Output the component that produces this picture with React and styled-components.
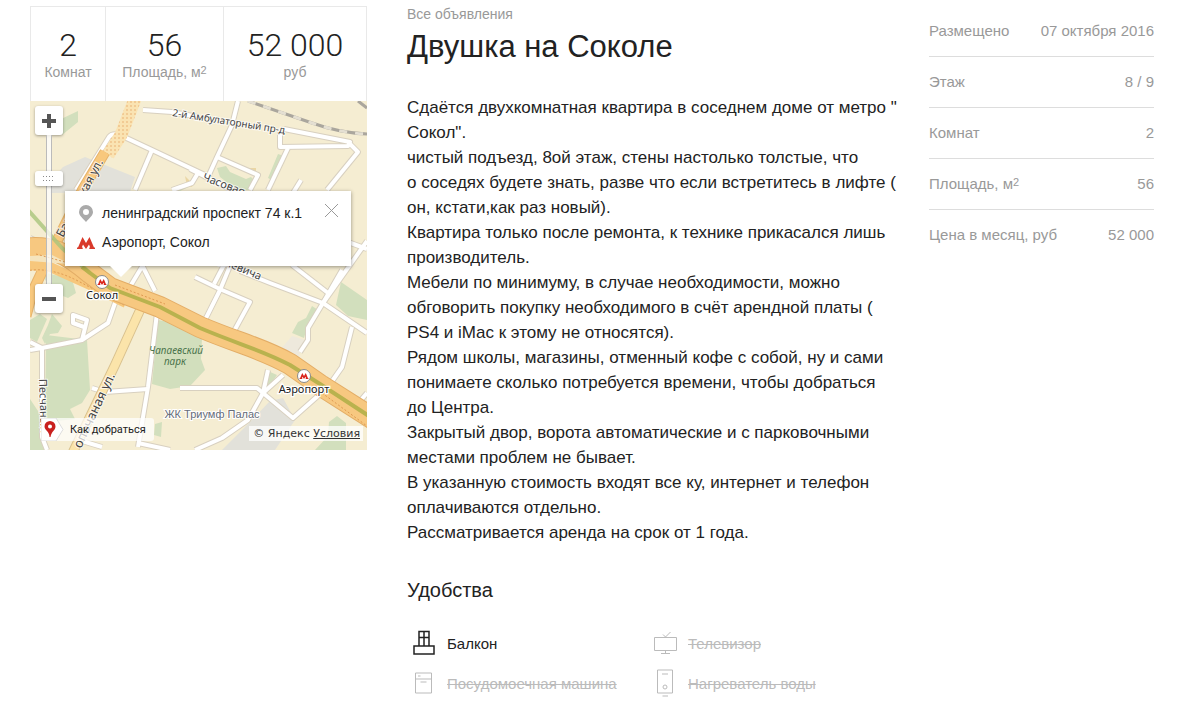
import React, { Fragment } from 'react';
import styled, { createGlobalStyle } from 'styled-components';

const GlobalStyle = createGlobalStyle`
  * { box-sizing: border-box; }
  body {
    margin: 0;
    background: #fff;
    color: #222;
    font-family: "Liberation Sans", Arial, sans-serif;
    font-size: 16px;
  }
`;

const Page = styled.div`
  display: grid;
  grid-template-columns: 337fr 482fr 225fr;
  column-gap: 40px;
  align-items: start;
  padding: 6px 46px 6px 30px;
`;

const Column = styled.div`
  min-width: 0;
`;

const Stats = styled.dl`
  display: grid;
  grid-template-columns: 74fr 118fr 143fr;
  margin: 0;
  border: 1px solid #e9e9e9;
  border-bottom: 0;
`;

const Stat = styled.div`
  display: flex;
  flex-direction: column-reverse;
  justify-content: flex-end;
  align-items: center;
  height: 94px;
  padding-top: 20px;
  & + & { border-left: 1px solid #e9e9e9; }
`;

const StatValue = styled.dd`
  margin: 0;
  font-family: Roboto, "Liberation Sans", sans-serif;
  font-size: 32px;
  font-weight: 300;
  line-height: 36px;
  white-space: nowrap;
`;

const StatLabel = styled.dt`
  color: #999;
  font-size: 14px;
  line-height: 18px;
`;

const Sup = styled.sup`
  font-size: 11px;
  line-height: 0;
  vertical-align: 3px;
`;

const MapBox = styled.section`
  position: relative;
  height: 349px;
  overflow: hidden;
  background: #f5edd2;
`;

const MapArt = styled.svg`
  display: block;
  width: 100%;
  height: 100%;
  font-family: "Noto Sans", "Open Sans", sans-serif;
`;

const ZoomPanel = styled.div`
  position: absolute;
  top: 5px;
  left: 5px;
  display: flex;
  flex-direction: column;
  align-items: center;
`;

const ZoomButton = styled.button`
  display: grid;
  place-items: center;
  width: 28px;
  height: 29px;
  padding: 0;
  border: 0;
  border-radius: 3px;
  background: #fff;
  box-shadow: 0 1px 3px rgba(0, 0, 0, 0.35);
  cursor: pointer;
`;

const ZoomSlider = styled.input`
  appearance: none;
  writing-mode: vertical-lr;
  direction: rtl;
  width: 28px;
  height: 149px;
  margin: 0;
  background: linear-gradient(90deg, transparent 11px, #bbb 11px 12px, rgba(255, 255, 255, 0.75) 12px 16px, #bbb 16px 17px, transparent 17px);
  &::-webkit-slider-thumb {
    appearance: none;
    width: 28px;
    height: 15px;
    border: 0;
    border-radius: 3px;
    background:
      linear-gradient(90deg, #fff 8px, transparent 8px 20px, #fff 20px),
      linear-gradient(#fff 5px, transparent 5px 10px, #fff 10px),
      conic-gradient(from 0deg at 1px 1px, #fff 75%, #888 0) 8px 5px / 3px 4px;
    box-shadow: 0 1px 3px rgba(0, 0, 0, 0.35);
  }
`;

const Balloon = styled.div`
  position: absolute;
  top: 90px;
  left: 35px;
  display: flex;
  justify-content: space-between;
  align-items: flex-start;
  width: 286px;
  height: 75px;
  padding: 8px 12px 8px 11px;
  background: #fff;
  box-shadow: 0 1px 4px rgba(0, 0, 0, 0.4);
  &::after {
    content: "";
    position: absolute;
    top: 75px;
    left: 45px;
    border: 11px solid transparent;
    border-top-color: #fff;
    border-bottom: 0;
  }
`;

const BalloonLine = styled.p`
  display: flex;
  align-items: center;
  gap: 6px;
  margin: 0;
  font-size: 14px;
  line-height: 29px;
  white-space: nowrap;
`;

const IconSlot = styled.span`
  display: grid;
  place-items: center;
  width: 20px;
`;

const CloseButton = styled.button`
  display: grid;
  margin-top: 4px;
  padding: 0;
  border: 0;
  background: none;
  cursor: pointer;
`;

const RouteButton = styled.button`
  position: absolute;
  bottom: 9px;
  left: 11px;
  display: flex;
  align-items: center;
  gap: 5px;
  height: 23px;
  padding: 0 8px 0 0;
  border: 0;
  border-radius: 3px;
  background: rgba(255, 255, 255, 0.7);
  color: #222;
  font: 11px/20px Roboto, "Open Sans", sans-serif;
  cursor: pointer;
`;

const Copyright = styled.div`
  position: absolute;
  right: 4px;
  bottom: 9px;
  padding: 0 3px 0 4px;
  background: rgba(255, 255, 255, 0.75);
  color: #333;
  font: 11px/15px "DejaVu Sans", sans-serif;
  a { color: inherit; }
`;

const BackLink = styled.a`
  display: block;
  color: #999;
  font-size: 14px;
  line-height: 17px;
  text-decoration: none;
`;

const Title = styled.h1`
  margin: 6px 0 30px;
  font-size: 31px;
  font-weight: 400;
  line-height: 36px;
`;

const Description = styled.p`
  margin: 0;
  font-size: 17px;
  line-height: 25px;
  white-space: nowrap;
`;

const Subtitle = styled.h2`
  margin: 32px 0 20px;
  font-size: 20px;
  font-weight: 400;
  line-height: 26px;
`;

const Amenities = styled.ul`
  display: grid;
  grid-template-columns: 1fr 1fr;
  margin: 0;
  padding: 0;
  list-style: none;
`;

const Amenity = styled.li`
  display: flex;
  align-items: center;
  gap: 6px;
  height: 40px;
  color: ${(p) => (p.$missing ? '#bbb' : '#222')};
  font-size: 15px;
  text-decoration: ${(p) => (p.$missing ? 'line-through' : 'none')};
  white-space: nowrap;
  svg { flex: none; }
`;

const Facts = styled.dl`
  margin: 0;
`;

const Fact = styled.div`
  display: flex;
  justify-content: space-between;
  color: #999;
  font-size: 15px;
  line-height: 50px;
  white-space: nowrap;
  & + & { border-top: 1px solid #ddd; }
  dt, dd { margin: 0; }
`;

const STATS = [
  ['2', 'Комнат'],
  ['56', <>Площадь, м<Sup>2</Sup></>],
  ['52 000', 'руб'],
];

const FACTS = [
  ['Размещено', '07 октября 2016'],
  ['Этаж', '8 / 9'],
  ['Комнат', '2'],
  [<>Площадь, м<Sup>2</Sup></>, '56'],
  ['Цена в месяц, руб', '52 000'],
];

const LINES = [
  'Сдаётся двухкомнатная квартира в соседнем доме от метро "',
  'Сокол".',
  'чистый подъезд, 8ой этаж, стены настолько толстые, что',
  'о соседях будете знать, разве что если встретитесь в лифте (',
  'он, кстати,как раз новый).',
  'Квартира только после ремонта, к технике прикасался лишь',
  'производитель.',
  'Мебели по минимуму, в случае необходимости, можно',
  'обговорить покупку необходимого в счёт арендной платы (',
  'PS4 и iMac к этому не относятся).',
  'Рядом школы, магазины, отменный кофе с собой, ну и сами',
  'понимаете сколько потребуется времени, чтобы добраться',
  'до Центра.',
  'Закрытый двор, ворота автоматические и с парковочными',
  'местами проблем не бывает.',
  'В указанную стоимость входят все ку, интернет и телефон',
  'оплачиваются отдельно.',
  'Рассматривается аренда на срок от 1 года.',
];

const ICONS = {
  balcony: (
    <g strokeWidth="1.5">
      <path d="M7 17V2.500h10V17M12 2.500V17M7 8.500h10M2 17h20v8h-20z" />
    </g>
  ),
  tv: <path d="M1.500 8.500h22v13h-22zM12.500 21.500v3M8 24.500h9M10 5.500l2.500 2.500L17.500 3" />,
  dishwasher: <path d="M3.500 4h16v20h-16zM3.500 10h16M6 7h2.500M8.500 13h6" />,
  heater: (
    <>
      <path d="M4.500 1h15v23h-15zM9 5h6M9.500 27h5.500" />
      <circle cx="12" cy="18" r="2" />
    </>
  ),
};

const AMENITIES = [
  ['balcony', 'Балкон', false],
  ['tv', 'Телевизор', true],
  ['dishwasher', 'Посудомоечная машина', true],
  ['heater', 'Нагреватель воды', true],
];

function AmenityIcon({ name }) {
  return (
    <svg width="34" height="28" viewBox="-5 0 34 28" fill="none" stroke="currentColor" aria-hidden="true">
      {ICONS[name]}
    </svg>
  );
}

const METRO_PATH = 'M0 12V10.500h1L5.500 0 9 6 12.500 0 17 10.500h1V12h-5.700v-1.500h.9L12 7.500 9 12 6 7.500l-1.200 3h.9V12z';

const ROADS = [
  'M46 89L79 36Q82 32 90 34L122 49L175 74',
  'M122 49L105 89',
  'M113 9L142 11L168 16',
  'M168 72L162 82L142 89',
  'M160 68L200 88',
  'M208 0L202 24L187 56L178 76',
  'M187 56L228 74L220 89',
  'M250 31V46L318 45L320 41L254 28',
  'M320 43L328 51L297 89',
  'M258 47L238 89',
  'M271 79L263 92',
  'M318 141L337 148',
  'M337 140L293 202',
  'M262 164L298 192',
  'M202 160L190 189L175 219',
  'M196 160L184 183',
  'M165 176L192 189L220 201L203 232',
  'M210 170L240 182L293 202L337 232',
  'M312 169L293 202L278 227V239L270 251',
  'M322 226L312 266L298 286L263 317L233 292L218 319L192 337L165 349',
  'M150 287H227L233 292L253 274',
  'M233 292L238 269',
  'M337 292L325 306',
  'M113 164L98 189L85 202L78 222L52 239L12 247L0 249',
  'M0 241L12 247V336L17 349',
  'M52 239L57 219L43 214V222L54 226',
  'M127 212L118 286L108 346',
  'M62 287L75 291L118 288',
  'M72 346L52 340',
  'M108 342L140 349',
  'M0 137L20 146L28 140',
  'M112 164L125 190',
];

function Station({ x, y, name }) {
  return (
    <>
      <g transform={`translate(${x} ${y})`}>
        <circle r="6.500" fill="#fff" stroke="#8a8a8a" />
        <path d={METRO_PATH} fill="#d9261c" transform="translate(-4.500 -3) scale(.5)" />
      </g>
      <text x={x} y={y + 17} fontSize="11" textAnchor="middle" fill="#222" stroke="#fff" strokeWidth="2.500" paintOrder="stroke">{name}</text>
    </>
  );
}

function CityMap() {
  return (
    <MapArt viewBox="0 0 337 349" preserveAspectRatio="xMidYMid slice" role="img" aria-label="Карта">
      <defs>
        <path id="highway" d="M-8 148C22 144 36 152 60 172L80 187L130 206L170 226C210 243 232 247 260 263L290 284L345 319" />
        <pattern id="dots" width="4" height="4" patternUnits="userSpaceOnUse">
          <rect width="4" height="4" fill="#fae3b2" />
          <rect width="2" height="2" fill="#f2cb94" />
        </pattern>
      </defs>
      <rect width="337" height="349" fill="#f5edd2" />
      <g fill="#d2dfbd">
        <path d="M29 19L48 10V21L32 34zM16 234L57 239L60 289L52 302L40 308L45 318L15 321zM128 219L145 222L172 237L171 258L175 269L160 285L140 288L122 283zM12 171L42 178L46 192L38 197L20 190zM0 219L10 213L17 218L7 241L0 237zM22 213L32 225L28 232L20 233L15 243L12 237L18 224z" />
        <path d="M187 67L196 65L200 71L216 78L221 76L226 81L220 89H207L190 76zM248 53L254 55L244 80L238 77zM282 205L288 209L278 223L274 237L262 232L268 221L276 217zM311 181L337 199V219L318 215L306 204zM238 270L247 274L238 287L234 285zM125 323L132 321L131 336L124 334zM143 86L160 81L161 85L150 90zM299 321L307 315L316 322L316 349H285L298 335zM0 298L8 310L17 349H0z" />
      </g>
      <g fill="#e2e1da">
        <path d="M33 66L55 56L105 76L100 91L20 92L22 78z" />
        <path d="M253 297L265 319L245 349H192L218 323L240 300z" />
        <path d="M262 235L275 239L268 257L249 250z" fill="#eee9dc" />
      </g>
      <g fill="#ead6a4"><path d="M155 75l5 5 6-3-4 9-5-1zM218 67h8v5z" /></g>
      <g fill="none" strokeLinejoin="round">
        {ROADS.map((d) => <path key={d} d={d} stroke="#d8d0c0" strokeWidth="6" />)}
        {ROADS.map((d) => <path key={d} d={d} stroke="#fff" strokeWidth="4" />)}
        <path d="M218 0L282 22Q310 32 337 33M328 0L337 7" stroke="#aaa69d" strokeWidth="3" />
        <path d="M218 0L282 22Q310 32 337 33" stroke="#e4dfd2" strokeWidth="3" strokeDasharray="8 8" />
        <path d="M105 -2L91 34L78 54" stroke="url(#dots)" strokeWidth="13" />
        <path d="M75 51L53 88L32 130L17 160L2 192L-4 215" stroke="#e6b36c" strokeWidth="11" />
        <path d="M75 51L53 88L32 130L17 160L2 192L-4 215" stroke="#f8c87d" strokeWidth="9" />
        <path d="M111 207L85 264L43 351" stroke="#d9c18e" strokeWidth="10" />
        <path d="M111 207L85 264L43 351" stroke="#fbe4aa" strokeWidth="8" />
        <path d="M-4 164L20 166L60 184L96 202" stroke="#f7c77c" strokeWidth="10" />
        <path d="M-4 170Q20 165 50 181L94 204" stroke="#df9951" strokeDasharray="2 2" />
        <use href="#highway" stroke="#e3ad66" strokeWidth="22" />
        <use href="#highway" stroke="#f7c880" strokeWidth="20" />
        <path d="M0 155L22 154L40 163L26 162L0 160z" fill="#f5e4bd" />
        <path d="M-2 109L32 147L60 172" stroke="#a9c47c" strokeWidth="4" strokeOpacity=".8" />
        <path d="M52 166L60 172L80 187L130 206L170 227C210 244 232 249 260 264L290 283L345 319" stroke="#b9b24e" strokeWidth="4" />
        <path d="M85 184L135 203M292 292L337 325M6 153L42 163" stroke="#df9951" strokeDasharray="2 2" />
      </g>
      <g fontSize="11" fill="#444" stroke="#fff" strokeWidth="2" strokeOpacity=".75" paintOrder="stroke">
        <text transform="translate(142 15) rotate(9)" fontSize="10">2-й Амбулаторный пр-д</text>
        <text transform="translate(172 79) rotate(21)">Часовая</text>
        <text transform="translate(182 159) rotate(23)">Луневича</text>
        <text transform="translate(33 137) rotate(-62)" fontSize="12">Балтийская ул.</text>
        <text transform="translate(51 348) rotate(-65)" fontSize="13">опочаная ул.</text>
        <text transform="translate(9 278) rotate(88)">Песчаный</text>
      </g>
      <g fontSize="10" fontStyle="italic" fill="#49734b" textAnchor="middle">
        <text x="146" y="253">Чапаевский</text>
        <text x="145" y="264">парк</text>
      </g>
      <text x="182" y="317" fontSize="11" fontFamily="Liberation Sans, sans-serif" textAnchor="middle" fill="#666c78" stroke="#fff" strokeWidth="2" paintOrder="stroke">ЖК Триумф Палас</text>
      <Station x={72} y={181} name="Сокол" />
      <Station x={274} y={275} name="Аэропорт" />
    </MapArt>
  );
}

function MapWidget() {
  return (
    <MapBox>
      <CityMap />
      <ZoomPanel>
        <ZoomButton aria-label="Приблизить">
          <svg width="14" height="14" aria-hidden="true"><path d="M7 0v14M0 7h14" stroke="#555" strokeWidth="4" /></svg>
        </ZoomButton>
        <ZoomSlider type="range" min="0" max="100" defaultValue="73" aria-label="Масштаб" />
        <ZoomButton aria-label="Отдалить">
          <svg width="14" height="14" aria-hidden="true"><path d="M0 7h14" stroke="#555" strokeWidth="4" /></svg>
        </ZoomButton>
      </ZoomPanel>
      <Balloon>
        <div>
          <BalloonLine>
            <IconSlot>
              <svg width="14" height="17" viewBox="0 0 14 17" aria-hidden="true">
                <path fillRule="evenodd" fill="#aaa" d="M7 0a7 7 0 0 1 7 7c0 3.500-3.500 6-7 10C3.500 13 0 10.500 0 7a7 7 0 0 1 7-7zm0 4a3 3 0 1 0 0 6 3 3 0 0 0 0-6z" />
              </svg>
            </IconSlot>
            ленинградский проспект 74 к.1
          </BalloonLine>
          <BalloonLine>
            <IconSlot>
              <svg width="18" height="12" viewBox="0 0 18 12" aria-hidden="true"><path fill="#d93a2b" d={METRO_PATH} /></svg>
            </IconSlot>
            Аэропорт, Сокол
          </BalloonLine>
        </div>
        <CloseButton aria-label="Закрыть">
          <svg width="15" height="15" aria-hidden="true"><path d="M1 1l13 13M14 1L1 14" stroke="#999" /></svg>
        </CloseButton>
      </Balloon>
      <RouteButton>
        <svg width="24" height="23" viewBox="0 0 24 23" aria-hidden="true">
          <path d="M0 0h15l7 11.500L15 23H0z" fill="#fff" stroke="#ddd" />
          <path fillRule="evenodd" fill="#c9201f" d="M9 3a5.500 5.500 0 0 1 5.500 5.500c0 4-4 4.500-5 10.500h-1c0-6-5-6.500-5-10.500A5.500 5.500 0 0 1 9 3zm0 3.500a2 2 0 1 0 0 4 2 2 0 0 0 0-4z" />
        </svg>
        Как добраться
      </RouteButton>
      <Copyright>© Яндекс <a href="#terms">Условия</a></Copyright>
    </MapBox>
  );
}

export default function App() {
  return (
    <>
      <GlobalStyle />
      <Page>
        <Column>
          <Stats>
            {STATS.map(([value, label], i) => (
              <Stat key={i}>
                <StatLabel>{label}</StatLabel>
                <StatValue>{value}</StatValue>
              </Stat>
            ))}
          </Stats>
          <MapWidget />
        </Column>
        <Column as="main">
          <BackLink href="#all">Все объявления</BackLink>
          <Title>Двушка на Соколе</Title>
          <Description>
            {LINES.map((line, i) => (
              <Fragment key={i}>{i > 0 && <br />}{line}</Fragment>
            ))}
          </Description>
          <Subtitle>Удобства</Subtitle>
          <Amenities>
            {AMENITIES.map(([icon, label, missing]) => (
              <Amenity key={icon} $missing={missing}>
                <AmenityIcon name={icon} />
                <span>{label}</span>
              </Amenity>
            ))}
          </Amenities>
        </Column>
        <Column as="aside">
          <Facts>
            {FACTS.map(([label, value], i) => (
              <Fact key={i}>
                <dt>{label}</dt>
                <dd>{value}</dd>
              </Fact>
            ))}
          </Facts>
        </Column>
      </Page>
    </>
  );
}
